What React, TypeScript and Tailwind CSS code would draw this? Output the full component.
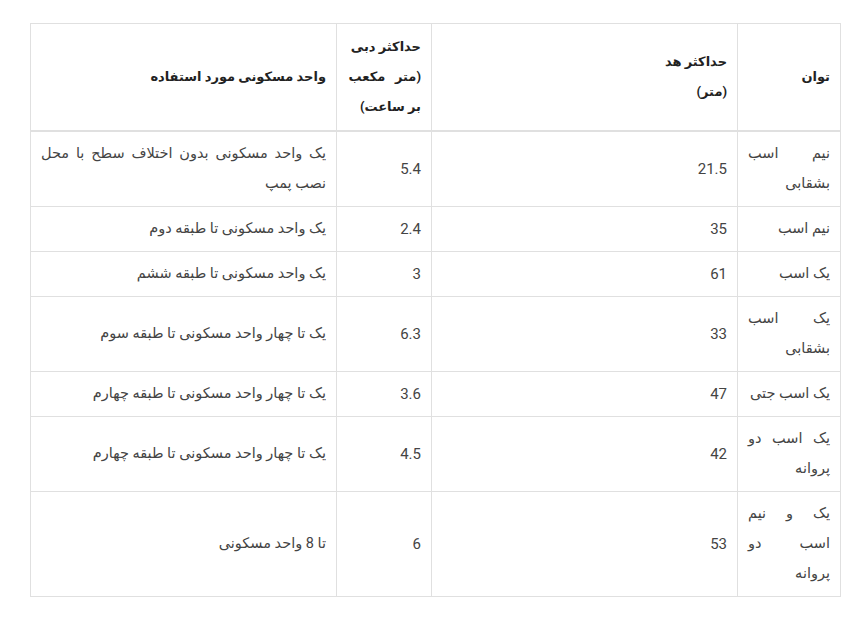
const rows = [
  { power: "نیم اسب بشقابی", head: "21.5", flow: "5.4", use: "یک واحد مسکونی بدون اختلاف سطح با محل نصب پمپ" },
  { power: "نیم اسب", head: "35", flow: "2.4", use: "یک واحد مسکونی تا طبقه دوم" },
  { power: "یک اسب", head: "61", flow: "3", use: "یک واحد مسکونی تا طبقه ششم" },
  { power: "یک اسب بشقابی", head: "33", flow: "6.3", use: "یک تا چهار واحد مسکونی تا طبقه سوم" },
  { power: "یک اسب جتی", head: "47", flow: "3.6", use: "یک تا چهار واحد مسکونی تا طبقه چهارم" },
  { power: "یک اسب دو پروانه", head: "42", flow: "4.5", use: "یک تا چهار واحد مسکونی تا طبقه چهارم" },
  { power: "", lines: ["یک و نیم", "اسب دو", "پروانه"], head: "53", flow: "6", use: "تا 8 واحد مسکونی" },
];

const App = () => {
  return (
    <div
      dir="rtl"
      className="min-h-screen bg-white pt-[23px] pl-[30px] pr-[21px] text-[14.5px] leading-[30px] text-[#444]"
      style={{ fontFamily: "Roboto, 'DejaVu Sans', sans-serif" }}
    >
      <table className="w-[811px] table-fixed border-collapse">
        <colgroup>
          <col className="w-[103px]" />
          <col className="w-[306px]" />
          <col className="w-[95px]" />
          <col />
        </colgroup>
        <thead>
          <tr className="border-b-2 border-[#e0e0e0]">
            <th className="border border-[#e0e0e0] px-[10px] py-[8px] text-right text-[13px] font-bold text-[#222] align-middle">
              توان
            </th>
            <th className="border border-[#e0e0e0] px-[10px] py-[8px] text-right text-[13px] font-bold text-[#222] align-middle">
              حداکثر هد
              <br />
              (متر)
            </th>
            <th className="whitespace-nowrap border border-[#e0e0e0] px-[10px] py-[8px] text-right text-[13px] font-bold text-[#222] align-middle">
              حداکثر دبی
              <br />
              (متر&nbsp;&nbsp;&nbsp;مکعب
              <br />
              بر ساعت)
            </th>
            <th className="border border-[#e0e0e0] px-[10px] py-[8px] text-right text-[13px] font-bold text-[#222] align-middle">
              واحد مسکونی مورد استفاده
            </th>
          </tr>
        </thead>
        <tbody>
          {rows.map((row, index) => (
            <tr key={index}>
              <td className="border border-[#e0e0e0] px-[10px] py-[7px] text-justify align-middle">
                {row.lines
                  ? row.lines.map((line, i) => (
                      <span
                        key={i}
                        className={`block text-justify ${i < row.lines.length - 1 ? "[text-align-last:justify]" : ""}`}
                      >
                        {line}
                      </span>
                    ))
                  : row.power}
              </td>
              <td className="border border-[#e0e0e0] px-[10px] py-[7px] text-right text-[15px] align-middle">{row.head}</td>
              <td className="border border-[#e0e0e0] px-[10px] py-[7px] text-right text-[15px] align-middle">{row.flow}</td>
              <td className="border border-[#e0e0e0] px-[10px] py-[7px] text-justify align-middle">{row.use}</td>
            </tr>
          ))}
        </tbody>
      </table>
    </div>
  );
};

export default App;
